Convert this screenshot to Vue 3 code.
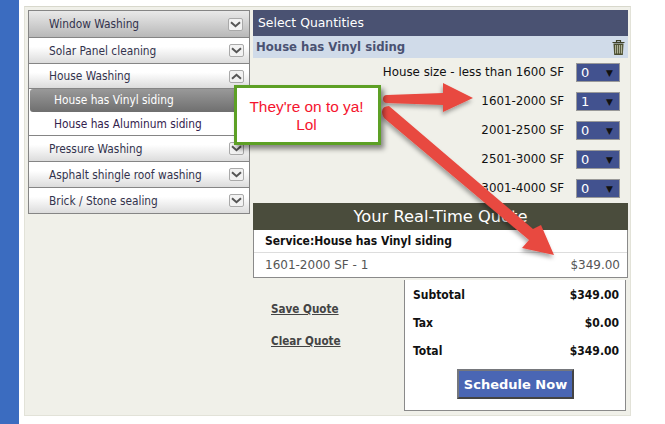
<script setup>
const navTop = [
  { label: 'Window Washing', first: true },
  { label: 'Solar Panel cleaning' },
]
const navBottom = [
  { label: 'Pressure Washing' },
  { label: 'Asphalt shingle roof washing' },
  { label: 'Brick / Stone sealing' },
]
const sizes = [
  { label: 'House size - less than 1600 SF', qty: 0 },
  { label: '1601-2000 SF', qty: 1 },
  { label: '2001-2500 SF', qty: 0 },
  { label: '2501-3000 SF', qty: 0 },
  { label: '3001-4000 SF', qty: 0 },
]
const totals = [
  { label: 'Subtotal', value: '$349.00' },
  { label: 'Tax', value: '$0.00' },
  { label: 'Total', value: '$349.00' },
]
</script>

<template>
  <div class="page">
    <div class="strip"></div>
    <div class="panel">
      <nav class="nav">
        <div v-for="n in navTop" :key="n.label" class="nav-item" :class="{ first: n.first }">
          <span>{{ n.label }}</span>
          <span class="chev"><svg width="11" height="7" viewBox="0 0 11 7"><path d="M1 1.2 5.5 5.2 10 1.2" fill="none" stroke="#555" stroke-width="2"/></svg></span>
        </div>
        <div class="nav-item open">
          <span>House Washing</span>
          <span class="chev"><svg width="11" height="7" viewBox="0 0 11 7"><path d="M1 5.8 5.5 1.8 10 5.8" fill="none" stroke="#555" stroke-width="2"/></svg></span>
        </div>
        <div class="sub">
          <div class="sub-item active">House has Vinyl siding</div>
          <div class="sub-item">House has Aluminum siding</div>
        </div>
        <div v-for="n in navBottom" :key="n.label" class="nav-item">
          <span>{{ n.label }}</span>
          <span class="chev"><svg width="11" height="7" viewBox="0 0 11 7"><path d="M1 1.2 5.5 5.2 10 1.2" fill="none" stroke="#555" stroke-width="2"/></svg></span>
        </div>
      </nav>

      <section class="main">
        <div class="head">Select Quantities</div>
        <div class="subhead">
          <span>House has Vinyl siding</span>
          <svg class="trash" width="13" height="15" viewBox="0 0 13 15">
            <path d="M4.500 2V.7h4V2M.5 2.500h12" fill="none" stroke="#3d4028" stroke-width="1.2"/>
            <path d="M1.500 3.500h10L10.800 15H2.200z" fill="#4a4d30"/>
            <path d="M3.600 5v8.600M5.600 5v8.600M7.600 5v8.600M9.600 5v8.600" stroke="#b4b79c" stroke-width="1.100"/>
          </svg>
        </div>
        <div class="rows">
          <div v-for="s in sizes" :key="s.label" class="row">
            <span class="row-label">{{ s.label }}</span>
            <span class="qty"><span>{{ s.qty }}</span><i class="tri">▼</i></span>
          </div>
        </div>
        <div class="quote-head">Your Real-Time Quote</div>
        <div class="quote">
          <div class="service">Service:House has Vinyl siding</div>
          <div class="line"><span>1601-2000 SF - 1</span><span>$349.00</span></div>
        </div>
        <div class="bottom">
          <div class="links">
            <a>Save Quote</a>
            <a>Clear Quote</a>
          </div>
          <div class="summary">
            <div v-for="t in totals" :key="t.label" class="total"><span>{{ t.label }}</span><span>{{ t.value }}</span></div>
            <button class="schedule">Schedule Now</button>
          </div>
        </div>
      </section>
    </div>

    <svg class="arrows" width="665" height="424" viewBox="0 0 665 424">
      <defs>
        <filter id="sh" x="-10%" y="-10%" width="120%" height="120%">
          <feDropShadow dx="-1" dy="3" stdDeviation="2" flood-color="#000" flood-opacity=".35"/>
        </filter>
      </defs>
      <g fill="#e8483f" filter="url(#sh)">
        <path d="M383 99Q383 95 387 95L443 93V83L473 98 443 112V105L387 103Q383 103 383 99Z"/>
        <path d="M382 112Q382 106 389 106L533 229 541 225 554 255 522 248 529 240 384 118Q382 115 382 112Z"/>
      </g>
    </svg>

    <div class="callout">They're on to ya!<br>Lol</div>
  </div>
</template>

<style>
html, body { margin: 0; background: #fff; }
</style>

<style scoped>
.page {
  position: relative;
  width: 665px;
  height: 424px;
  overflow: hidden;
  display: flex;
  background: #fff;
  font-family: "DejaVu Sans", Verdana, sans-serif;
  font-size: 12px;
}
.strip { width: 19px; height: 424px; background: #3b6cc0; flex: none; }
.panel {
  margin: 6px 0 0 5px;
  width: 607px;
  height: 410px;
  box-sizing: border-box;
  border: 1px solid #e2e2d8;
  border-top-color: #d8d8cc;
  background: #f0f0e9;
  padding: 3px;
  display: flex;
  align-items: flex-start;
  gap: 3px;
}
.nav {
  width: 222px;
  flex: none;
  box-sizing: border-box;
  border: 1px solid #858585;
  border-bottom: 0;
  background: #fff;
}
.nav-item {
  height: 25px;
  border-bottom: 1px solid #858585;
  display: flex;
  align-items: center;
  justify-content: space-between;
  padding: 0 5px 0 20px;
  background: linear-gradient(#fff 35%, #dcdcdc);
  color: #33334d;
  font-size: 11.800px;
  font-stretch: condensed;
  font-family: "DejaVu Sans Condensed", "DejaVu Sans", sans-serif;
}
.nav-item.first {
  height: 26px;
  background: linear-gradient(#e9e9e9, #b8b8b8);
  padding-right: 6px;
}
.nav-item.open { height: 24px; }
.chev {
  width: 13px;
  height: 11px;
  border: 1px solid #a9a9a9;
  border-radius: 2px;
  background: #f2f2f2;
  display: flex;
  align-items: center;
  justify-content: center;
}
.sub { border-bottom: 1px solid #858585; background: #fff; height: 46px; }
.sub-item {
  height: 23px;
  line-height: 24px;
  padding-left: 25px;
  color: #33224d;
  font-size: 11.800px;
  font-stretch: condensed;
  font-family: "DejaVu Sans Condensed", "DejaVu Sans", sans-serif;
}
.sub-item.active {
  margin: 0 0 0 1px;
  padding-left: 24px;
  border-radius: 3px;
  background: linear-gradient(#999, #6f6f6f);
  color: #fff;
  line-height: 23px;
}
.main { width: 375px; flex: none; }
.head {
  height: 26px;
  line-height: 26px;
  background: #4a5272;
  color: #fff;
  padding-left: 5px;
  font-size: 12.4px;
}
.subhead {
  height: 22px;
  background: #d0dbe9;
  color: #4a5272;
  font-weight: 700;
  font-size: 11.700px;
  padding: 0 3px 0 3px;
  display: flex;
  align-items: center;
  justify-content: space-between;
}
.trash { display: block; }
.rows { height: 145px; }
.row {
  height: 29px;
  display: flex;
  align-items: center;
  justify-content: flex-end;
  padding-right: 8px;
  color: #111;
  font-size: 11.850px;
}
.row-label { margin-right: 12px; position: relative; top: -1px; }
.qty {
  width: 44px;
  height: 19px;
  box-sizing: border-box;
  border: 1px solid #999;
  background: #42528f;
  color: #fff;
  font-size: 13px;
  display: flex;
  align-items: center;
  justify-content: space-between;
  padding: 0 6px 0 4px;
}
.tri { font-style: normal; font-size: 9px; color: #111; }
.quote-head {
  height: 27px;
  line-height: 27px;
  background: #4a4c3c;
  color: #fff;
  font-size: 16.300px;
  text-align: center;
}
.quote {
  background: #fff;
  border: 1px solid #8a8a8a;
  border-top: 0;
  height: 48px;
  box-sizing: border-box;
}
.service {
  height: 22px;
  line-height: 22px;
  padding-left: 11px;
  font-weight: 700;
  color: #111;
  border-bottom: 1px solid #ddd;
  font-size: 12px;
  font-stretch: condensed;
  font-family: "DejaVu Sans Condensed", "DejaVu Sans", sans-serif;
}
.line {
  height: 24px;
  display: flex;
  align-items: center;
  justify-content: space-between;
  padding: 0 7px 0 11px;
  color: #555;
  font-size: 12px;
}
.bottom { display: flex; margin-top: 2px; }
.links {
  width: 151px;
  padding: 21px 0 0 18px;
  box-sizing: border-box;
  display: flex;
  flex-direction: column;
  gap: 16px;
  font-weight: 700;
  font-size: 11.600px;
  font-stretch: condensed;
  font-family: "DejaVu Sans Condensed", "DejaVu Sans", sans-serif;
  color: #444;
}
.links a { text-decoration: underline; line-height: 16px; }
.summary {
  width: 222px;
  height: 131px;
  box-sizing: border-box;
  background: #fff;
  border: 1px solid #8a8a8a;
  border-top: 0;
  padding: 1px 6px 0 8px;
  font-weight: 700;
  font-size: 12px;
  font-stretch: condensed;
  font-family: "DejaVu Sans Condensed", "DejaVu Sans", sans-serif;
  color: #111;
}
.total {
  height: 28px;
  display: flex;
  align-items: center;
  justify-content: space-between;
}
.schedule {
  display: block;
  margin: 4px 0 0 44px;
  width: 117px;
  height: 30px;
  box-sizing: border-box;
  border: 2px solid #6f7175;
  border-color: #75777c #444 #444 #75777c;
  background: #4a66b4;
  color: #fff;
  font-family: "DejaVu Sans", Verdana, sans-serif;
  font-weight: 700;
  font-size: 13px;
  padding: 0;
}
.arrows { position: absolute; left: 0; top: 0; pointer-events: none; }
.callout {
  position: absolute;
  left: 234px;
  top: 85px;
  width: 147px;
  height: 60px;
  box-sizing: border-box;
  border: 3px solid #5da025;
  background: #fff;
  box-shadow: 3px 4px 5px rgba(0,0,0,.45);
  color: #f5142e;
  font-family: "Liberation Sans", Arial, sans-serif;
  font-size: 15.400px;
  line-height: 18px;
  text-align: center;
  padding: 10px 2px 0 0;
}
</style>
